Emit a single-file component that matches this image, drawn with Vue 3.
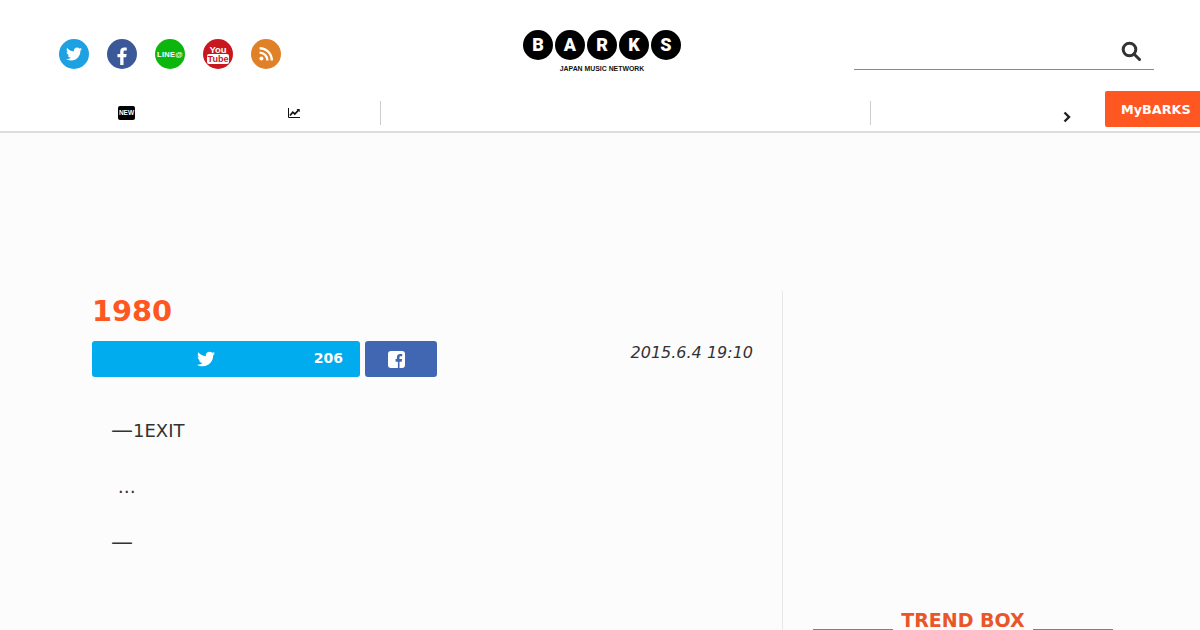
<script setup>
const letters = ['B', 'A', 'R', 'K', 'S']
const twitterPath = 'M459.37 151.716c.325 4.548.325 9.097.325 13.645 0 138.72-105.583 298.558-298.558 298.558-59.452 0-114.68-17.219-161.137-47.106 8.447.974 16.568 1.299 25.34 1.299 49.055 0 94.213-16.568 130.274-44.832-46.132-.975-84.792-31.188-98.112-72.772 6.498.974 12.995 1.624 19.818 1.624 9.421 0 18.843-1.3 27.614-3.573-48.081-9.747-84.143-51.98-84.143-102.985v-1.299c13.969 7.797 30.214 12.67 47.431 13.319-28.264-18.843-46.781-51.005-46.781-87.391 0-19.492 5.197-37.36 14.294-52.954 51.655 63.675 129.3 105.258 216.365 109.807-1.624-7.797-2.599-15.918-2.599-24.04 0-57.828 46.782-104.934 104.934-104.934 30.213 0 57.502 12.67 76.67 33.137 23.715-4.548 46.456-13.32 66.599-25.34-7.798 24.366-24.366 44.833-46.132 57.827 21.117-2.273 41.584-8.122 60.426-16.243-14.292 20.791-32.161 39.308-52.628 54.253z'
</script>

<template>
  <div class="page">
    <header class="header">
      <div class="top">
        <div class="social">
          <a class="sns tw">
            <svg width="16" height="16" viewBox="0 0 512 512"><path :d="twitterPath" fill="#fff" /></svg>
          </a>
          <a class="sns fb">
            <svg width="10" height="18" viewBox="0 0 10 19"><path d="M6.600 19v-8.300h2.800l.5-3.300H6.600V5.300c0-1 .3-1.600 1.600-1.600H10V.8C9.600.7 8.600.6 7.400.6 4.800.6 3.100 2.100 3.100 5v2.400H.2v3.300h2.900V19z" fill="#fff" /></svg>
          </a>
          <a class="sns line">LINE@</a>
          <a class="sns yt">
            <span class="yt-you">You</span>
            <span class="yt-tube">Tube</span>
          </a>
          <a class="sns rss">
            <svg width="14" height="14" viewBox="0 0 14 14" fill="none" stroke="#fff" stroke-width="2.400">
              <circle cx="2.400" cy="11.600" r="2" fill="#fff" stroke="none" />
              <path d="M.6 5.600a7.800 7.800 0 0 1 7.800 7.800" />
              <path d="M.6 1.200a12.200 12.200 0 0 1 12.200 12.200" />
            </svg>
          </a>
        </div>
        <div class="logo">
          <div class="logo-row">
            <span v-for="l in letters" :key="l" class="logo-ball">{{ l }}</span>
          </div>
          <div class="logo-sub">JAPAN MUSIC NETWORK</div>
        </div>
        <div class="search">
          <svg width="20" height="20" viewBox="0 0 20 20" fill="none" stroke="#333" stroke-width="3">
            <circle cx="8.500" cy="8.500" r="6.300" />
            <path d="M13 13l5.500 5.500" stroke-linecap="round" />
          </svg>
        </div>
      </div>
      <nav class="nav">
        <div class="nav-item first">
          <span class="new-icon">NEW</span>
        </div>
        <div class="nav-item second">
          <svg width="12" height="10" viewBox="0 0 12 10" fill="none" stroke="#111">
            <path d="M.5 0v9.500H12" />
            <path d="M2 7.500L4.800 4.200 6.800 6 10.500 2.200" stroke-width="1.700" />
            <path d="M8.500 1H11.700V4.200z" fill="#111" stroke="none" />
          </svg>
        </div>
        <div class="nav-item third"></div>
        <div class="nav-item fourth">
          <svg width="10" height="12" viewBox="0 0 10 12" fill="none" stroke="#222" stroke-width="2.400">
            <path d="M2.500 1.500L7 6 2.500 10.500" />
          </svg>
        </div>
        <a class="mybarks">MyBARKS</a>
      </nav>
    </header>

    <main class="main">
      <article class="article">
        <h1 class="title">1980</h1>
        <div class="meta">
          <div class="share">
            <a class="btn-tw">
              <svg width="18" height="18" viewBox="0 0 512 512"><path :d="twitterPath" fill="#fff" /></svg>
              <span class="count">206</span>
            </a>
            <a class="btn-fb">
              <svg width="17" height="17" viewBox="0 0 17 17">
                <path fill="#fff" fill-rule="evenodd" d="M3 0h11a3 3 0 0 1 3 3v11a3 3 0 0 1-3 3h-2.500v-6.300h2.200l.4-2.600h-2.600V6.600c0-.8.300-1.300 1.300-1.300h1.400V3c-.4 0-1.100-.1-2-.1-2 0-3.300 1.200-3.300 3.400v1.800H7.600v2.600h2.300V17H3a3 3 0 0 1-3-3V3a3 3 0 0 1 3-3z" />
              </svg>
            </a>
          </div>
          <time class="date">2015.6.4 19:10</time>
        </div>
        <div class="body">
          <p><span class="dash">—</span>1EXIT</p>
          <p>&nbsp;…</p>
          <p><span class="dash">—</span></p>
        </div>
      </article>
      <aside class="side">
        <h2 class="trend"><span>TREND BOX</span></h2>
      </aside>
    </main>
  </div>
</template>

<style>
html, body {
  margin: 0;
  height: 630px;
  overflow: hidden;
  background: #fcfcfc;
}
</style>

<style scoped>
.page {
  font-family: "DejaVu Sans", sans-serif;
  color: #333;
}

a {
  text-decoration: none;
}

.header {
  background: #fff;
  border-bottom: 2px solid #ddd;
}

.top {
  height: 91px;
  display: flex;
  position: relative;
}

.social {
  display: flex;
  gap: 18px;
  padding: 39px 0 0 59px;
  width: 464px;
  box-sizing: border-box;
}

.sns {
  width: 30px;
  height: 30px;
  border-radius: 50%;
  display: flex;
  flex-direction: column;
  align-items: center;
  justify-content: center;
  color: #fff;
}

.tw { background: #1da1e2; }
.fb { background: #3b5998; }
.fb svg { margin-top: 3px; }
.rss { background: #e08027; }
.yt { background: #c8171e; }

.line {
  background: #0cb60c;
  font: bold 7.500px "Liberation Sans Narrow", "Liberation Sans", sans-serif;
  letter-spacing: .3px;
}

.yt-you {
  font: bold 9.500px/9px "Liberation Sans Narrow", "Liberation Sans", sans-serif;
}

.yt-tube {
  font: bold 9px/10px "Liberation Sans Narrow", "Liberation Sans", sans-serif;
  background: #fff;
  color: #c8171e;
  border-radius: 2px;
  padding: 0 1px;
}

.logo {
  width: 158px;
  margin: 30px 0 0 59px;
  display: flex;
  flex-direction: column;
  align-items: center;
}

.logo-row {
  display: flex;
  gap: 2px;
}

.logo-ball {
  width: 30px;
  height: 30px;
  border-radius: 50%;
  background: #000;
  color: #fff;
  font: 900 18px/30px Roboto, sans-serif;
  text-align: center;
}

.logo-sub {
  font: bold 6.900px/8px "Liberation Sans", sans-serif;
  color: #111;
  margin-top: 4.500px;
  white-space: nowrap;
}

.search {
  position: absolute;
  left: 854px;
  top: 41px;
  width: 300px;
  height: 29px;
  border-bottom: 1px solid #888;
  display: flex;
  justify-content: flex-end;
  padding-right: 13px;
  box-sizing: border-box;
}

.nav {
  height: 40px;
  display: flex;
  padding-left: 42px;
}

.nav-item {
  height: 24px;
  margin-top: 10px;
  display: flex;
  align-items: center;
  justify-content: center;
  box-sizing: border-box;
}

.first { width: 169px; }
.second { width: 170px; border-right: 1px solid #ccc; padding-right: 4px; }
.third { width: 490px; border-right: 1px solid #ccc; }
.fourth {
  width: 234px;
  justify-content: flex-end;
  padding: 8px 33px 0 0;
}

.new-icon {
  width: 17px;
  height: 14px;
  background: #000;
  color: #fff;
  border-radius: 2px;
  font: bold 6.500px/14px "Liberation Sans", sans-serif;
  text-align: center;
}

.mybarks {
  width: 95px;
  height: 36px;
  background: #ff5722;
  color: #fff;
  border-radius: 2px 0 0 2px;
  font-size: 12.800px;
  font-weight: bold;
  line-height: 37px;
  padding-left: 16px;
  box-sizing: border-box;
  white-space: nowrap;
}

.main {
  display: flex;
  padding: 158px 0 0 92px;
  height: 340px;
  background: #fcfcfc;
}

.article {
  flex: none;
  width: 661px;
  margin-right: 29px;
}

.title {
  margin: 0;
  font-size: 28.800px;
  line-height: 41px;
  color: #ff5722;
}

.meta {
  display: flex;
  justify-content: space-between;
  align-items: flex-start;
  margin-top: 9px;
}

.share {
  display: flex;
  gap: 5px;
}

.btn-tw, .btn-fb {
  height: 36px;
  border-radius: 3px;
  display: flex;
  align-items: center;
  color: #fff;
  position: relative;
}

.btn-tw {
  width: 268px;
  background: #00aced;
  justify-content: center;
}

.btn-tw svg {
  margin-right: 40px;
}

.count {
  position: absolute;
  right: 17px;
  top: 9px;
  font-size: 14px;
  font-weight: bold;
}

.btn-fb {
  width: 72px;
  background: #4267b2;
  padding-left: 23px;
  box-sizing: border-box;
}

.date {
  font-size: 16px;
  font-style: italic;
  line-height: 22px;
  margin-top: 1px;
}

.body {
  padding: 41px 0 0 20px;
  font-size: 18px;
  line-height: 26px;
}

.body p {
  margin: 0 0 30px;
}

.dash {
  font-size: 22px;
  line-height: 0;
  margin-left: -1px;
}

.side {
  flex: 1;
  border-left: 1px solid #e8e8e8;
  padding: 319px 87px 0 30px;
  height: 21px;
}

.trend {
  margin: 0;
  display: flex;
  justify-content: space-between;
  align-items: center;
  font-size: 19px;
  line-height: 20px;
  color: #e9562a;
  white-space: nowrap;
}

.trend::before, .trend::after {
  content: "";
  width: 80px;
  height: 1px;
  background: #d9603a;
  margin-top: 19px;
}
</style>
